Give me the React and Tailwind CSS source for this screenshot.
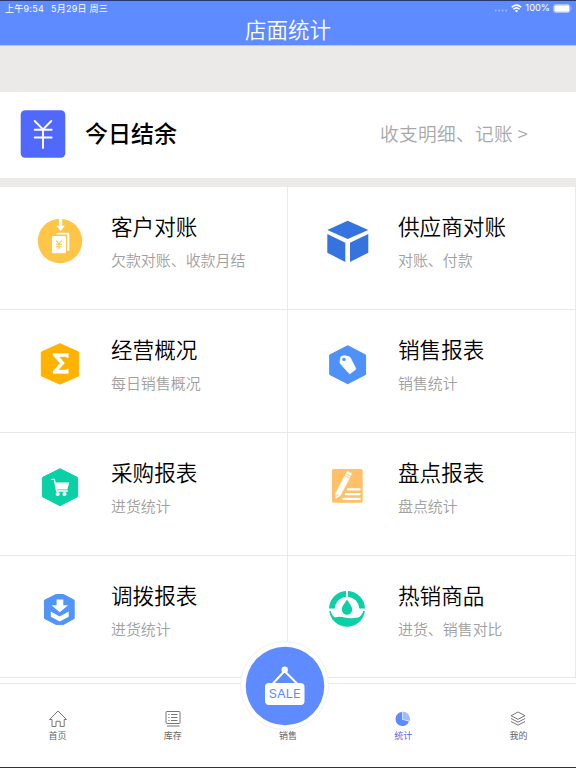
import React from "react";

const WHITE = "#ffffff";

function CustomerIcon() {
  return (
    <>
      <circle cx="30" cy="30" r="22.2" fill="#ffc547" />
      <path d="M28.9 6.5h3.3v8.2h2.6L30.6 20l-4.2-5.3h2.5z" fill={WHITE} />
      <path d="M26.5 23.5v-.8a1 1 0 0 1 1-1h10.8a1 1 0 0 1 1 1v16a1 1 0 0 1-1 1h-1.1V24.5a1 1 0 0 0-1-1z" fill={WHITE} />
      <rect x="22" y="25" width="14" height="17.3" rx="1.2" fill={WHITE} />
      <path d="M26.2 29.5l2.8 3.4 2.8-3.4M26 33.2h6M26 35.7h6M29 33v5" fill="none" stroke="#ffc547" strokeWidth="1.1" />
    </>
  );
}

function BoxIcon() {
  return (
    <g fill="#3574df">
      <path d="M29.7 9.7L50.3 19 29.7 28.1 9.3 19z" />
      <path d="M9.3 23l18 8.7V51l-18-9.3z" />
      <path d="M32 31.7L50.3 23v18.7L32 51z" />
    </g>
  );
}

function SigmaIcon() {
  return (
    <>
      <path d="M30 9.6l18.8 8.4v24L30 50.2 11.2 42V18z" fill="#ffb300" stroke="#ffb300" strokeWidth=".8" strokeLinejoin="round" />
      <path d="M23 19.500h15.400v4.300h-1.300q-.2-1.100-1.500-1.100h-6.600l5.600 6.300-6.300 7h7.200q1.300 0 1.500-1.100h1.400v4.700H23v-2.400l7-8-7-7.900z" fill={WHITE} stroke={WHITE} strokeWidth=".3" />
    </>
  );
}

function TagIcon() {
  return (
    <>
      <path d="M29.7 11.7L47.6 21v19.5L29.7 49.7 11.7 40.5V21z" fill="#4e91f9" stroke="#4e91f9" strokeWidth="1" strokeLinejoin="round" />
      <path d="M22.8 22.7l3.4-1.200 5 1.200q.8.3 1.200 1.100l5.300 10.500q.4.9-.4 1.500l-5 3.700q-.9.500-1.500-.3L22.300 29.600q-.5-.7-.4-1.500z" fill={WHITE} stroke={WHITE} strokeWidth=".6" strokeLinejoin="round" />
      <circle cx="26" cy="25.400" r="1.700" fill="#4e91f9" />
    </>
  );
}

function CartIcon() {
  return (
    <>
      <path d="M30 11.700l17.600 8.800v19.200L30 48.700l-17.600-9V20.500z" fill="#09d0a5" stroke="#09d0a5" strokeWidth="1" strokeLinejoin="round" />
      <path d="M21.800 22.400h2.500l2.400 11.600h10.600" fill="none" stroke={WHITE} strokeWidth="1.400" strokeLinecap="round" strokeLinejoin="round" />
      <path d="M25 25.500h14.300l-2 7H26.500z" fill={WHITE} />
      <circle cx="27.700" cy="37" r="2.100" fill={WHITE} />
      <circle cx="34.500" cy="37" r="2.100" fill={WHITE} />
    </>
  );
}

function PencilIcon() {
  return (
    <>
      <rect x="14" y="12" width="30.700" height="33.700" rx="1.800" fill="#ffc067" />
      <g transform="translate(24.700 28.400) rotate(28)" fill={WHITE}>
        <path d="M-2.700-13.800q0-1 1-1h3.400q1 0 1 1v1.500h-5.400zM-2.700-11.300h5.400v1.200h-5.400zM-2.700-9.100h5.400V10L0 15l-2.700-5z" stroke={WHITE} strokeWidth=".3" />
        <path d="M-1.100 10.700h2.200L0 13z" fill="#ffc067" />
      </g>
      <path d="M30 32.400h11.600M27.800 37.100h13.800M25.200 41.900h16.400" stroke={WHITE} strokeWidth="2.200" strokeLinecap="round" />
    </>
  );
}

function TransferIcon() {
  return (
    <>
      <path d="M26 14.500h7.500l10.700 5.700v18.300l-10.700 5.900H26l-11.500-5.900V20.200z" fill="#5195f8" stroke="#5195f8" strokeWidth="1" strokeLinejoin="round" />
      <path d="M26.600 19.400h6.700v5.800h4.800l-8.400 7-8.200-7h5.100z" fill={WHITE} />
      <path d="M20.800 31.500l8.900 5 9-5v5.200l-9 4.700-8.900-4.700z" fill={WHITE} />
    </>
  );
}

function DropIcon() {
  return (
    <g fill="#09d0a5">
      <path d="M28 11v5.800A12.300 12.300 0 0 0 16.700 28.600H11A18 18 0 0 1 28 11z" />
      <path d="M30 11a18 18 0 0 1 17 17.600h-5.700A12.300 12.300 0 0 0 30 16.800z" />
      <path d="M29 19.500c1.800 3.500 5.200 6.500 5.200 10a5.200 5.200 0 0 1-10.400 0c0-3.500 3.400-6.500 5.200-10z" />
      <path d="M11.200 31h1.500c.7 3 2.300 5.400 4.300 6.500 3.500-1.300 6.400-.9 9.500 0 4.600 1.400 8.700.7 14.400-.3 2.200-1.500 3.600-3.600 4.400-6.200h1.600A18 18 0 0 1 11.200 31z" />
    </g>
  );
}

const reports = [
  { title: "客户对账", note: "欠款对账、收款月结", Icon: CustomerIcon },
  { title: "供应商对账", note: "对账、付款", Icon: BoxIcon },
  { title: "经营概况", note: "每日销售概况", Icon: SigmaIcon },
  { title: "销售报表", note: "销售统计", Icon: TagIcon },
  { title: "采购报表", note: "进货统计", Icon: CartIcon },
  { title: "盘点报表", note: "盘点统计", Icon: PencilIcon },
  { title: "调拨报表", note: "进货统计", Icon: TransferIcon },
  { title: "热销商品", note: "进货、销售对比", Icon: DropIcon },
];

function StatusBar() {
  return (
    <div className="flex h-[15px] items-center justify-between border-t border-[#26386f] pr-1 pl-[5px] font-['Inter','Noto_Sans_CJK_SC',sans-serif] text-[9px] leading-none text-white">
      <div className="flex gap-[7px] tracking-[0.25px]">
        <span>上午9:54</span>
        <span>5月29日 周三</span>
      </div>
      <div className="flex items-center">
        <svg className="mr-[3px] h-3 w-[14px]" viewBox="0 0 14 12" fill="#a5bdff">
          <circle cx="1.700" cy="8.500" r=".9" />
          <circle cx="5.200" cy="8.500" r=".9" />
          <circle cx="8.700" cy="8.500" r=".9" />
          <circle cx="12.200" cy="8.500" r=".9" />
        </svg>
        <svg className="mr-[3px] h-[9px] w-[11px]" viewBox="0 0 11 9" fill="none" stroke="white" strokeWidth="1.500">
          <path d="M.7 3.300q4.800-4.300 9.600 0M2.400 5.300q3.100-2.800 6.200 0" />
          <path d="M3.900 6.700q1.600-1.200 3.200 0L5.500 8.500z" fill="white" stroke="none" />
        </svg>
        <span className="mr-[3px] text-[9.300px]">100%</span>
        <svg className="h-[9px] w-[19px]" viewBox="0 0 19 9">
          <rect x=".5" y=".5" width="16.500" height="8" rx="2.200" fill="none" stroke="#a9c0ff" />
          <rect x="1.300" y="1.300" width="15" height="6.400" rx="1.300" fill="white" />
          <path d="M18 3q1.200 1.500 0 3z" fill="#a9c0ff" />
        </svg>
      </div>
    </div>
  );
}

function ReportCell({ title, note, Icon }) {
  return (
    <div className="group flex border-r border-b border-[#e9e9e9] pt-[23px] pl-[30px]">
      <svg className="mt-px size-[60px] shrink-0" viewBox="0 0 60 60">
        <Icon />
      </svg>
      <div className="pl-[21px] group-even:pl-5">
        <h3 className="text-[21.600px] leading-8 font-[350] whitespace-nowrap text-black">{title}</h3>
        <p className="mt-1.5 text-[14.950px] leading-6 font-[350] whitespace-nowrap text-[#a0a0a0]">{note}</p>
      </div>
    </div>
  );
}

function Tab({ label, active, children }) {
  return (
    <div className={active ? "flex flex-col items-center text-[#5068ea]" : "flex flex-col items-center text-[#666]"}>
      <svg className="size-5" viewBox="0 0 20 20" fill="none" stroke="currentColor" strokeWidth="0.9">
        {children}
      </svg>
      <span className="mt-px text-[9px] leading-3">{label}</span>
    </div>
  );
}

export default function App() {
  return (
    <div className="flex h-[768px] w-[576px] flex-col overflow-hidden bg-[#ebeae8] font-['Noto_Sans_CJK_SC',sans-serif]">
      <header className="h-[46px] shrink-0 border-b border-[#b9c8f5] bg-[#5e8bff]">
        <StatusBar />
        <h1 className="text-center text-[21.500px] leading-7 font-[350] text-white">店面统计</h1>
      </header>

      <section className="mt-[46px] flex h-[86px] shrink-0 items-start bg-white pt-[18px] pr-12 pl-5">
        <svg className="h-12 w-[46px]" viewBox="0 0 46 48">
          <rect x=".7" y=".3" width="44.600" height="47.500" rx="4.500" fill="#5169fa" />
          <path d="M14.700 11l8.300 8.500 8.300-8.500M14.700 19.700h17M14.700 27.500h17M23 19.500V38" fill="none" stroke="white" strokeWidth="1.900" strokeLinecap="round" />
        </svg>
        <h2 className="mt-1.5 ml-[19px] text-[23px] leading-8 font-medium text-black">今日结余</h2>
        <span className="mt-[7px] ml-auto text-[18.700px] leading-8 font-[350] tracking-[0.300px] text-[#a8a8a8]">收支明细、记账 &gt;</span>
      </section>

      <main className="mt-[9px] grid h-[496px] shrink-0 grid-cols-2 grid-rows-[123px_123px_123px_122px] bg-white">
        {reports.map((report) => (
          <ReportCell key={report.title} {...report} />
        ))}
      </main>

      <nav className="relative grid h-[85px] grid-cols-5 border-t border-b border-t-[#e8e8e8] border-b-[#333] bg-white pt-[25px]">
        <Tab label="首页">
          <path d="M1.500 10.500L10 2l8.500 8.500h-2.300v7h-4v-5.200H8v5.200H4v-7z" strokeLinejoin="round" />
        </Tab>
        <Tab label="库存">
          <rect x="3" y="2.500" width="14" height="12" rx="1" />
          <path d="M4 17h12.500M5.300 5.500h1.200M8 5.500h6.500M5.300 8.500h1.200M8 8.500h6.500M5.300 11.500h1.200M8 11.500h6.500" />
        </Tab>
        <div className="flex flex-col items-center pt-[21px] text-[#666]">
          <span className="text-[9px] leading-3">销售</span>
        </div>
        <Tab label="统计" active>
          <path d="M9 3v7.500l7 2A7 7 0 1 1 9 3z" fill="#5e8bff" stroke="none" />
          <path d="M9.500 2.500a7.500 7.500 0 0 1 7.300 9.500l-7.300-1.800z" fill="#a4bcff" stroke="none" />
        </Tab>
        <Tab label="我的">
          <path d="M10 3l7 3.700-7 3.600-7-3.600zM3 9.500l7 3.700 7-3.700M3 12.500l7 3.700 7-3.700" strokeLinejoin="round" />
        </Tab>
        <div className="absolute -top-[43px] left-[240px] flex size-[89px] items-center justify-center rounded-full border border-[#f2f2f2] bg-white">
          <svg className="size-20" viewBox="0 0 80 80">
            <circle cx="40" cy="40" r="39.300" fill="#5e8bff" />
            <path d="M28 37.500L39.500 25 52 37.500" fill="none" stroke="white" strokeWidth="2" />
            <circle cx="39.700" cy="23.800" r="3.200" fill="white" />
            <rect x="20" y="37" width="39.500" height="22" rx="4" fill="white" />
            <text x="39.800" y="52" textAnchor="middle" fontFamily="Inter, sans-serif" fontSize="12" fontWeight="400" textLength="32" lengthAdjust="spacingAndGlyphs" fill="#5e8bff">SALE</text>
          </svg>
        </div>
      </nav>
    </div>
  );
}
